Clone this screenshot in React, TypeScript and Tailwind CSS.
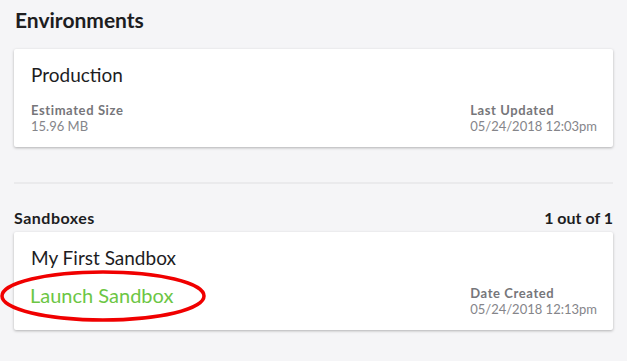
import React from "react";

function MetaBlock({ label, value }: { label: string; value: string }) {
  return (
    <div className="flex flex-col">
      <span className="text-[13px] leading-[16px] font-bold tracking-[0.6px] text-[#76767a]">{label}</span>
      <span className="text-[13px] leading-[16px] text-[#85858a]">{value}</span>
    </div>
  );
}

function EnvCard({
  title,
  left,
  right,
}: {
  title: string;
  left: React.ReactNode;
  right: React.ReactNode;
}) {
  return (
    <div className="bg-white rounded-[2px] shadow-[0_1px_3px_rgba(0,0,0,0.28)] h-[98px] pl-[17px] pr-[16px] pt-[15px] flex flex-col">
      <h3 className="text-[19px] leading-[22px] text-[#1d1d1f]">{title}</h3>
      <div className="flex justify-between items-end mt-auto mb-[13px]">
        {left}
        {right}
      </div>
    </div>
  );
}

export default function App() {
  return (
    <div
      className="w-full h-[361px] bg-[#f5f5f7] px-[14px] pt-[8px] overflow-hidden"
      style={{ fontFamily: "Lato, 'Noto Sans', sans-serif" }}
    >
      <h1 className="text-[21px] leading-[24px] font-bold text-[#1d1d1f] ml-[1px]">Environments</h1>

      <div className="mt-[17px]">
        <EnvCard
          title="Production"
          left={<MetaBlock label="Estimated Size" value="15.96 MB" />}
          right={<MetaBlock label="Last Updated" value="05/24/2018 12:03pm" />}
        />
      </div>

      <hr className="mt-[35px] border-0 border-t-[2px] border-[#eaeaec]" />

      <div className="flex justify-between items-end mt-[24px] mb-[5px]">
        <h2 className="text-[16px] leading-[19px] font-bold tracking-[0.5px] text-[#1d1d1f]">Sandboxes</h2>
        <span className="text-[16px] leading-[19px] font-bold text-[#1d1d1f]">1 out of 1</span>
      </div>

      <div className="relative">
        <EnvCard
          title="My First Sandbox"
          left={
            <span className="text-[20px] leading-[24px] text-[#6cc644] mb-[10px] -ml-[1px]">Launch Sandbox</span>
          }
          right={<MetaBlock label="Date Created" value="05/24/2018 12:13pm" />}
        />
        <svg
          className="absolute left-[-14px] top-[38px] pointer-events-none"
          width="210"
          height="54"
          viewBox="0 0 210 54"
        >
          <ellipse cx="103" cy="26" rx="101" ry="24" fill="none" stroke="#f00000" strokeWidth="3.5" />
        </svg>
      </div>
    </div>
  );
}
